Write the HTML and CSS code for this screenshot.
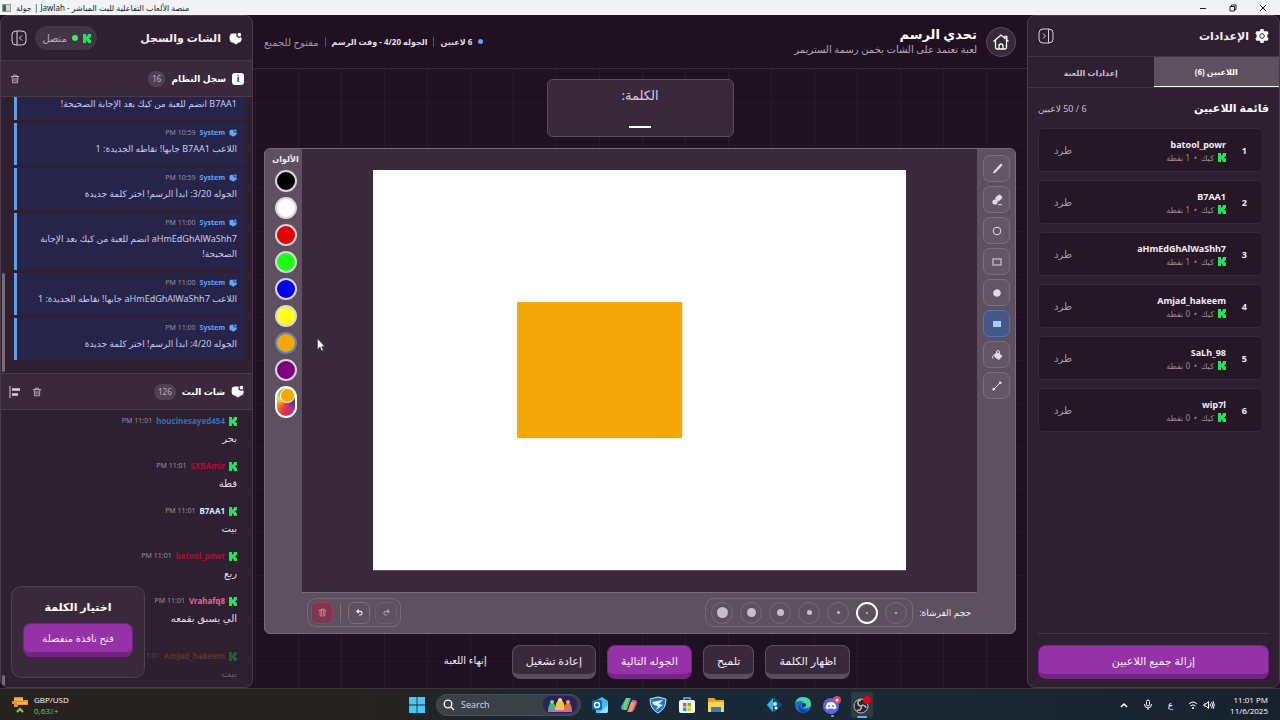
FILE: index.html
```html
<!DOCTYPE html>
<html lang="ar" dir="rtl">
<head>
<meta charset="utf-8">
<title>منصة الألعاب التفاعلية للبث المباشر - Jawlah | جولة</title>
<link rel="stylesheet" href="styles.css">
</head>
<body>
<svg class="defs" aria-hidden="true">
  <symbol id="kick" viewBox="0 0 9 10"><path d="M0 0h3.400v2.800h1V1.500h1V0H9v3.200H8v1.200H7v1.200h1v1.200h1V10H5.400V8.500h-1V7.200h-1V10H0z"/></symbol>
  <symbol id="chat" viewBox="0 0 14 14"><path d="M4 1.500h4.300a3 3 0 0 0 3.700 4.400h1.500V8c0 2-1.300 3.200-3 3.400L7.500 13.500 4.500 11.500C2 11.300.7 10 .7 7.800V5C.7 2.800 2 1.500 4 1.500z"/><circle cx="11.200" cy="2.900" r="2"/></symbol>
  <symbol id="trash" viewBox="0 0 12 12"><path d="M1.500 3h9M4.300 2.800V1.300h3.400v1.500M2.600 3.200l.4 7.300h6l.4-7.300M4.800 5v3.600M7.200 5v3.600" fill="none" stroke="currentColor" stroke-linecap="round"/></symbol>
  <symbol id="undo" viewBox="0 0 12 12"><path d="M5 2L2.500 4.500 5 7M3 4.500h4a2.400 2.400 0 0 1 0 4.800H5.500" fill="none" stroke="currentColor" stroke-width="1.500"/></symbol>
</svg>

<div class="window">
  <header class="titlebar">
    <div class="win-controls">
      <button aria-label="إغلاق"><svg width="8" height="8" viewBox="0 0 8 8"><path d="M1 1l6 6M7 1L1 7"/></svg></button>
      <button aria-label="استعادة"><svg width="8" height="8" viewBox="0 0 8 8"><path d="M1 2.500h4.500V7H1zM2.500 2V1H7v4.500H6"/></svg></button>
      <button aria-label="تصغير"><svg width="8" height="8" viewBox="0 0 8 8"><path d="M1 4.500h6"/></svg></button>
    </div>
    <div class="win-title"><span>منصة الألعاب التفاعلية للبث المباشر - Jawlah | جولة</span><i class="favicon"></i></div>
  </header>

  <div class="app">
    <aside class="panel settings">
      <div class="panel-head">
        <svg class="gear" width="14" height="14" viewBox="0 0 14 14"><path d="M5.500 0h3l.5 1.900 1.300.7 1.900-.6 1.500 2.600L12.300 6v2l1.400 1.400-1.500 2.600-1.900-.6-1.300.7-.5 1.900h-3L5 12.100l-1.300-.7-1.900.6L.3 9.400 1.700 8V6L.3 4.600 1.800 2l1.900.6L5 1.900z" fill="#fff"/><circle cx="7" cy="7" r="2.300" fill="none" stroke="#2f2031"/></svg>
        <h2>الإعدادات</h2>
        <button class="icon-btn push" aria-label="طي الإعدادات"><svg width="16" height="16" viewBox="0 0 16 16"><rect x="1" y="1" width="14" height="14" rx="4"/><path d="M10.500 1v14M5 5.500L7.500 8 5 10.500"/></svg></button>
      </div>
      <nav class="tabs"><button class="tab active">اللاعبين (6)</button><button class="tab">إعدادات اللعبة</button></nav>
      <div class="players-head"><h3>قائمة اللاعبين</h3><span>6 / 50 لاعبين</span></div>
      <ol class="players">
        <li><b class="rank">1</b><div class="who"><strong>batool_powr</strong><small><svg class="kick"><use href="#kick"/></svg><span>كيك</span><span>•</span><span>1 نقطة</span></small></div><button>طرد</button></li>
        <li><b class="rank">2</b><div class="who"><strong>B7AA1</strong><small><svg class="kick"><use href="#kick"/></svg><span>كيك</span><span>•</span><span>1 نقطة</span></small></div><button>طرد</button></li>
        <li><b class="rank">3</b><div class="who"><strong>aHmEdGhAlWaShh7</strong><small><svg class="kick"><use href="#kick"/></svg><span>كيك</span><span>•</span><span>1 نقطة</span></small></div><button>طرد</button></li>
        <li><b class="rank">4</b><div class="who"><strong>Amjad_hakeem</strong><small><svg class="kick"><use href="#kick"/></svg><span>كيك</span><span>•</span><span>0 نقطة</span></small></div><button>طرد</button></li>
        <li><b class="rank">5</b><div class="who"><strong>SaLh_98</strong><small><svg class="kick"><use href="#kick"/></svg><span>كيك</span><span>•</span><span>0 نقطة</span></small></div><button>طرد</button></li>
        <li><b class="rank">6</b><div class="who"><strong>wip7l</strong><small><svg class="kick"><use href="#kick"/></svg><span>كيك</span><span>•</span><span>0 نقطة</span></small></div><button>طرد</button></li>
      </ol>
      <div class="panel-foot"><button class="btn primary wide">إزالة جميع اللاعبين</button></div>
    </aside>

    <main class="stage">
      <header class="stage-head">
        <button class="home" aria-label="الرئيسية"><svg width="18" height="18" viewBox="0 0 18 18"><path d="M1.500 8.500L9 2l4 3.400V3.500h1.800v3.400l1.700 1.600M3.500 7v7.500q0 1.500 1.500 1.500h8q1.500 0 1.500-1.500V7M7 16v-3a2 2 0 0 1 4 0v3"/></svg></button>
        <div class="game"><h1>تحدي الرسم</h1><p>لعبة تعتمد على الشات يخمن رسمة الستريمر</p></div>
        <div class="status push"><i class="dot"></i><b>6 لاعبين</b><i class="bar"></i><b>الجوله 4/20 - وقت الرسم</b><i class="bar"></i><span>مفتوح للجميع</span></div>
      </header>
      <div class="stage-body">
        <section class="word"><span>الكلمة:</span><i class="blank"></i></section>
        <section class="board">
          <div class="tools">
            <button aria-label="فرشاة"><svg viewBox="0 0 12 12"><path d="M10 2L6 6.500" stroke-width="2.500" stroke-linecap="round"/><path d="M4.300 6.300L6 8q-1 2.500-4.500 2.300Q3 9 3 8z" fill="currentColor" stroke="none"/></svg></button>
            <button aria-label="ممحاة"><svg viewBox="0 0 12 12"><g fill="currentColor" stroke="none"><rect x="4.500" y="1.500" width="6.500" height="5" rx="1.500" transform="rotate(-42 7.700 4)"/><circle cx="4" cy="8" r="2.600"/></g><path d="M7 10.700h4"/></svg></button>
            <button aria-label="دائرة"><svg viewBox="0 0 12 12"><circle cx="6" cy="6" r="3.800"/></svg></button>
            <button aria-label="مستطيل"><svg viewBox="0 0 12 12"><rect x="2" y="3" width="8" height="6"/></svg></button>
            <button aria-label="دائرة ممتلئة"><svg viewBox="0 0 12 12"><circle cx="6" cy="6" r="3.300" fill="currentColor"/></svg></button>
            <button class="active" aria-label="مستطيل ممتلئ"><svg viewBox="0 0 12 12"><rect x="2.500" y="3.500" width="7" height="5" fill="currentColor"/></svg></button>
            <button aria-label="تعبئة"><svg viewBox="0 0 12 12"><path d="M4 5l3-1 4 3-3 3.500-4-2.500z" fill="currentColor"/><path d="M5.500 5V3a1.500 1.500 0 0 1 3 0v3M4 6Q1.500 5.500 1.500 9.500"/></svg></button>
            <button aria-label="خط"><svg viewBox="0 0 12 12"><path d="M3 9l6-6"/><g fill="currentColor" stroke="none"><circle cx="2.800" cy="9.200" r="1.400"/><circle cx="9.200" cy="2.800" r="1.400"/></g></svg></button>
          </div>
          <div class="surface"><svg class="canvas" viewBox="0 0 533 400" role="img" aria-label="لوحة الرسم"><rect width="533" height="400" fill="#fff"/><rect x="144" y="132" width="165" height="136" fill="#f5a70a"/></svg></div>
          <div class="colors"><b>الألوان</b>
            <button class="c-black" aria-label="أسود"></button><button class="c-white" aria-label="أبيض"></button><button class="c-red" aria-label="أحمر"></button><button class="c-green" aria-label="أخضر"></button><button class="c-blue" aria-label="أزرق"></button><button class="c-yellow" aria-label="أصفر"></button><button class="c-orange" aria-label="برتقالي"></button><button class="c-purple" aria-label="بنفسجي"></button><button class="c-custom" aria-label="لون مخصص"><i></i></button>
          </div>
          <div class="board-foot">
            <span class="brush-label">حجم الفرشاة:</span>
            <div class="sizes">
              <button aria-label="1"><i class="s1"></i></button><button class="active" aria-label="2"><i class="s2"></i></button><button aria-label="3"><i class="s3"></i></button><button aria-label="4"><i class="s4"></i></button><button aria-label="5"><i class="s5"></i></button><button aria-label="6"><i class="s6"></i></button><button aria-label="7"><i class="s7"></i></button>
            </div>
            <div class="history push">
              <button class="disabled" aria-label="إعادة"><svg class="flip"><use href="#undo"/></svg></button>
              <button aria-label="تراجع"><svg><use href="#undo"/></svg></button>
              <i class="bar"></i>
              <button class="danger" aria-label="مسح"><svg><use href="#trash"/></svg></button>
            </div>
          </div>
        </section>
        <div class="actions">
          <button class="btn">اظهار الكلمة</button><button class="btn">تلميح</button><button class="btn primary">الجوله التالية</button><button class="btn">إعادة تشغيل</button><button class="btn plain">إنهاء اللعبة</button>
        </div>
      </div>
    </main>

    <aside class="panel chat">
      <div class="panel-head tall">
        <svg class="ico"><use href="#chat"/></svg><h2>الشات والسجل</h2>
        <span class="live push"><svg class="kick"><use href="#kick"/></svg><i></i>متصل</span>
        <button class="icon-btn" aria-label="طي الشات"><svg width="16" height="16" viewBox="0 0 16 16"><rect x="1" y="1" width="14" height="14" rx="4"/><path d="M6 1v14M11 5.500L8.500 8l2.500 2.500"/></svg></button>
      </div>
      <div class="sub-head"><i class="info">i</i><h3>سجل النظام</h3><span class="count">16</span><button class="icon-btn push" aria-label="حذف السجل"><svg class="sm"><use href="#trash"/></svg></button></div>
      <div class="log">
        <i class="thumb"></i>
        <article><header><svg><use href="#chat"/></svg><b>System</b><time>10:59 PM</time></header><p>B7AA1 انضم للعبة من كيك بعد الإجابة الصحيحة!</p></article>
        <article><header><svg><use href="#chat"/></svg><b>System</b><time>10:59 PM</time></header><p>اللاعب B7AA1 جابها! نقاطه الجديدة: 1</p></article>
        <article><header><svg><use href="#chat"/></svg><b>System</b><time>10:59 PM</time></header><p>الجوله 3/20: ابدأ الرسم! اختر كلمة جديدة</p></article>
        <article><header><svg><use href="#chat"/></svg><b>System</b><time>11:00 PM</time></header><p>aHmEdGhAlWaShh7 انضم للعبة من كيك بعد الإجابة الصحيحة!</p></article>
        <article><header><svg><use href="#chat"/></svg><b>System</b><time>11:00 PM</time></header><p>اللاعب aHmEdGhAlWaShh7 جابها! نقاطه الجديدة: 1</p></article>
        <article><header><svg><use href="#chat"/></svg><b>System</b><time>11:00 PM</time></header><p>الجوله 4/20: ابدأ الرسم! اختر كلمة جديدة</p></article>
      </div>
      <div class="sub-head"><svg class="ico"><use href="#chat"/></svg><h3>شات البث</h3><span class="count">126</span><button class="icon-btn push" aria-label="حذف الشات"><svg class="sm"><use href="#trash"/></svg></button><button class="icon-btn" aria-label="محاذاة"><svg width="12" height="12" viewBox="0 0 12 12"><path d="M1 0v12"/><path d="M3 3.500h8M3 8.500h6" stroke-width="2.500"/></svg></button></div>
      <div class="feed">
        <article><header><svg class="kick"><use href="#kick"/></svg><b class="n-blue">houcinesayed454</b><time>11:01 PM</time></header><p>بحر</p></article>
        <article><header><svg class="kick"><use href="#kick"/></svg><b class="n-red">SXBAmir</b><time>11:01 PM</time></header><p>قطة</p></article>
        <article><header><svg class="kick"><use href="#kick"/></svg><b class="n-ice">B7AA1</b><time>11:01 PM</time></header><p>بيت</p></article>
        <article><header><svg class="kick"><use href="#kick"/></svg><b class="n-red">batool_powr</b><time>11:01 PM</time></header><p>ربع</p></article>
        <article><header><svg class="kick"><use href="#kick"/></svg><b class="n-pink">Vrahafq8</b><time>11:01 PM</time></header><p>الي يسبق بقمعه</p></article>
        <article class="entering"><header><svg class="kick"><use href="#kick"/></svg><b class="n-gold">Amjad_hakeem</b><time>11:01 PM</time></header><p>بيت</p></article>
        <i class="thumb end"></i>
      </div>
      <section class="popup"><h3>اختيار الكلمة</h3><button class="btn primary">فتح نافذة منفصلة</button></section>
    </aside>
  </div>

  <footer class="taskbar" dir="ltr">
    <div class="widget"><svg width="18" height="18" viewBox="0 0 18 18"><path d="M2 1h9v3h5v5H6v2H2V8H0V5h2z" fill="#e8922f"/><path d="M2 3.500h9M5 7h10" stroke="#ffc35a" stroke-width="1.500"/><path d="M5 16l3-3 3 3" fill="none" stroke="#7bd63b" stroke-width="2"/></svg><div><span>GBP/USD</span><span class="up">0,63٪+</span></div></div>
    <div class="dock">
      <button aria-label="Start"><svg width="16" height="16" viewBox="0 0 16 16" fill="#4cc7f5"><path d="M0 0h7.600v7.600H0zM8.400 0H16v7.600H8.400zM0 8.400h7.600V16H0zM8.400 8.400H16V16H8.400z"/></svg></button>
      <label class="search"><svg width="12" height="12" viewBox="0 0 12 12"><circle cx="5" cy="5" r="3.800"/><path d="M8 8l3 3"/></svg><input type="search" placeholder="Search" aria-label="Search"><svg class="art" width="34" height="17" viewBox="0 0 34 17"><rect width="34" height="17" rx="8" fill="#2b2060"/><path d="M5 16q0-9 4-9t4 9z" fill="#47b86b"/><path d="M12 16q0-12 5-12t5 12z" fill="#f3c34a"/><path d="M21 16q0-9 4-9t4 9z" fill="#e8713a"/><circle cx="9" cy="6" r="2" fill="#7edb7d"/><circle cx="17" cy="4" r="2" fill="#ffe070"/><circle cx="25" cy="6" r="2" fill="#ff9960"/><path d="M5 15h24" stroke="#d05fc8" stroke-width="2"/></svg></label>
      <button aria-label="Outlook"><svg width="18" height="18" viewBox="0 0 18 18"><path d="M4 5l7-4 6 4v10q0 2-2 2H5z" fill="#4ab8ef"/><path d="M8 17l9-8v6q0 2-2 2z" fill="#91dffa"/><rect x="1" y="4" width="10" height="10" rx="2" fill="#1267b9"/><circle cx="6" cy="9" r="2.500" fill="none" stroke="#fff" stroke-width="1.400"/></svg></button>
      <button aria-label="Copilot"><svg width="18" height="18" viewBox="0 0 18 18"><path d="M6 2h5L7 14H4q-4 0-2.500-4z" fill="#38a6ee"/><path d="M3 11l3-9h3L6 14H4z" fill="#78cf55"/><path d="M12 4h2q4 0 2.500 4L14 14q-1 2-3 2H7z" fill="#d758b9"/><path d="M11 6h4l-3 9q-1 1-4 1z" fill="#f6a054"/></svg></button>
      <button aria-label="Rocket League"><svg width="18" height="18" viewBox="0 0 18 18"><path d="M9 1l8 2q0 10-8 14Q1 13 1 3z" fill="#1b76c3" stroke="#cfe5f5"/><path d="M3 6l11-2-4 4 4 1-7 5 2-4-4-1z" fill="#e9f5ff"/></svg></button>
      <button aria-label="Store"><svg width="18" height="18" viewBox="0 0 18 18"><path d="M6 5V2h6v3" fill="none" stroke="#58b8e8" stroke-width="1.500"/><rect x="1" y="4" width="16" height="13" rx="2" fill="#f4f6f8"/><path d="M5 7h3.500v3.500H5z" fill="#f25022"/><path d="M9.500 7H13v3.500H9.500z" fill="#7fba00"/><path d="M5 11.500h3.500V15H5z" fill="#00a4ef"/><path d="M9.500 11.500H13V15H9.500z" fill="#ffb900"/></svg></button>
      <button aria-label="Explorer"><svg width="18" height="18" viewBox="0 0 18 18"><path d="M1 2h6l2 2h8v12H1z" fill="#e6a526"/><path d="M1 6h16v10H1z" fill="#ffd35a"/><path d="M4 11h10v5H4z" fill="#2c7fc4"/></svg></button>
      <button class="after-gap" aria-label="Launcher"><svg width="18" height="18" viewBox="0 0 18 18"><path d="M9 1l8 8-8 8-8-8z" fill="#134e7d"/><path d="M8 2v14L2 9z" fill="#35b7e8"/><circle cx="10" cy="8" r="2" fill="#bfeeff"/><circle cx="11" cy="12" r="1.500" fill="#fff"/></svg></button>
      <button aria-label="Edge"><svg width="18" height="18" viewBox="0 0 18 18"><circle cx="9" cy="9" r="8" fill="#1673c9"/><path d="M1 8Q2 1 9 1q8 0 8 7 0 4-5 4-3 0-2-3 0-4-4-4-4 0-5 3z" fill="#4bd6a0"/><path d="M6 8q-1 6 7 6l2-.5Q12 17 8 17 2 14 6 8z" fill="#0b4c9a"/><circle cx="10" cy="9" r="2" fill="#17303f"/></svg></button>
      <button aria-label="Discord"><svg width="18" height="18" viewBox="0 0 18 18"><circle cx="8" cy="10" r="8" fill="#5865f2"/><path d="M4 7q4-2 8 0l1.500 5-2.500 1.500-1-1H6l-1 1L2.500 12z" fill="#fff"/><circle cx="6" cy="10" r="1" fill="#5865f2"/><circle cx="10" cy="10" r="1" fill="#5865f2"/><circle cx="14" cy="4" r="4" fill="#e04456"/><circle cx="14" cy="4" r="1.500" fill="#fff"/></svg><i class="run"></i></button>
      <button class="current" aria-label="OBS"><svg width="18" height="18" viewBox="0 0 18 18"><circle cx="8" cy="10" r="7" fill="#24272b" stroke="#b7bcc0"/><path d="M8 4a3 3 0 0 0 0 6M13 12a3 3 0 0 0-5-2M4 14a3 3 0 0 0 4-4" fill="none" stroke="#b7bcc0" stroke-width="1.500"/><circle cx="14" cy="4" r="4" fill="#e50012"/></svg><i class="run wide-run"></i></button>
    </div>
    <div class="tray">
      <svg width="8" height="8" viewBox="0 0 8 8"><path d="M1 6l3-3 3 3" stroke-width="1.500"/></svg>
      <svg width="10" height="12" viewBox="0 0 10 12"><rect x="3.500" y="1" width="3" height="6" rx="1.500"/><path d="M1.500 5q0 4 3.500 4t3.500-4M5 9v2"/></svg>
      <span class="lang">ع</span>
      <span class="net"><svg width="10" height="10" viewBox="0 0 10 10"><path d="M1 4q4-4 8 0M2.500 6q2.500-2.500 5 0"/><circle cx="5" cy="8" r="1" fill="#fff" stroke="none"/></svg><svg width="12" height="10" viewBox="0 0 12 10"><path d="M1 4h2l2.500-2.500v7L3 6H1zM7 3.500q1 1.500 0 3M8.500 2q2.500 3 0 6M10 1q2.500 4 0 8"/></svg></span>
      <time>11:01 PM<br>11/6/2025</time>
    </div>
  </footer>
  <svg class="cursor" width="8" height="14" viewBox="0 0 8 14"><path d="M.5.500v11L3 9l1.700 4 1.600-.7L4.600 8.500h3z" fill="#fff" stroke="#333" stroke-width=".5"/></svg>
</div>
</body>
</html>
```

FILE: styles.css
```css
* { box-sizing: border-box; }
body { margin: 0; font-family: "Noto Sans", "DejaVu Sans", sans-serif; font-size: 9px; color: #f3edf5; background: #1f1121; }
h1, h2, h3, p, ol { margin: 0; padding: 0; }
button { font: inherit; color: inherit; background: none; border: 0; padding: 0; display: flex; align-items: center; justify-content: center; cursor: pointer; flex-shrink: 0; }
svg { display: block; flex-shrink: 0; }
i { font-style: normal; }
.defs { position: absolute; width: 0; height: 0; }
.push { margin-inline-start: auto; }
.kick { width: 8px; height: 9px; fill: #1fe45c; }
.window { height: 100vh; display: flex; flex-direction: column; position: relative; overflow: hidden; }

.titlebar { height: 15px; flex-shrink: 0; background: #f1f3f7; color: #222; display: flex; align-items: center; justify-content: space-between; padding: 0 13px 0 2px; }
.win-controls { display: flex; gap: 22px; }
.win-controls svg { fill: none; stroke: #222; stroke-width: 1; }
.win-title { display: flex; align-items: center; gap: 5px; font-size: 8px; line-height: 14px; white-space: nowrap; }
.favicon { width: 9px; height: 8px; border: 1px solid #999; background: linear-gradient(90deg, #277650 50%, #c9dccf 50%); }

.app { flex: 1; min-height: 0; display: flex; }
.panel { width: 253px; flex-shrink: 0; display: flex; flex-direction: column; background: #2e2030; border: 1px solid #493b4b; border-radius: 8px; position: relative; overflow: hidden; }
.panel-head { display: flex; align-items: center; height: 41px; padding: 0 10px; gap: 6px; border-bottom: 1px solid #433446; flex-shrink: 0; }
.panel-head.tall { height: 45px; gap: 8px; }
h2 { font-size: 11px; line-height: 16px; white-space: nowrap; }
.icon-btn { min-width: 16px; color: #c9bdcb; }
.icon-btn svg { fill: none; stroke: #d9cedb; }
.tabs { display: flex; height: 31px; flex-shrink: 0; border-bottom: 1px solid #433446; }
.tab { flex: 1; font-size: 8px; font-weight: 700; color: #cabdcc; }
.tab.active { background: #5d505f; color: #fff; border-bottom: 1px solid #fff; }
.players-head { display: flex; justify-content: space-between; align-items: center; height: 40px; padding: 0 10px; color: #c9bdcb; font-size: 9px; }
h3 { font-size: 11px; line-height: 14px; color: #fff; white-space: nowrap; }
.players { list-style: none; display: flex; flex-direction: column; gap: 8px; padding: 0 16px 0 10px; flex: 1; }
.players li { height: 44px; border: 1px solid #39293b; border-radius: 5px; background: #251726; display: flex; align-items: center; padding: 0 15px; }
.players li > button { margin-inline-start: auto; color: #a99dac; font-size: 10px; }
.rank { width: 21px; }
.who { display: flex; flex-direction: column; align-items: flex-start; }
.who strong { display: block; font-size: 9px; line-height: 14px; font-weight: 700; }
.who small { display: flex; align-items: center; gap: 4px; font-size: 8px; line-height: 11px; color: #9a8d9d; }
.panel-foot { margin: 0 10px; padding: 11px 0 8px; border-top: 1px solid #433446; }

.btn { height: 34px; padding: 0 13px; border: 1px solid #5b4d5e; border-bottom-width: 5px; border-radius: 8px; background: #39293b; color: #f3edf5; font-size: 11px; white-space: nowrap; }
.btn.primary { background: #9632a8; border-color: #762386; }
.btn.plain { background: none; border-color: transparent; font-size: 10px; }
.btn.wide { width: 100%; }

.stage { flex: 1; min-width: 0; display: flex; flex-direction: column; background: #1f1121; }
.stage-head { height: 54px; flex-shrink: 0; display: flex; align-items: center; gap: 9px; padding: 0 11px; border-bottom: 1px solid #382a3b; }
.home { width: 30px; height: 30px; border-radius: 50%; border: 1px solid #5b4d5e; background: #39293b; }
.home svg { fill: none; stroke: #fff; stroke-width: 1.3; }
h1 { font-size: 13px; line-height: 16px; color: #fff; }
.game p { font-size: 10px; line-height: 15px; color: #b5a8b8; }
.status { display: flex; align-items: center; gap: 6px; font-size: 8px; white-space: nowrap; color: #a094a3; }
.status b { color: #e6dde8; }
.status span { font-size: 10px; }
.dot { width: 5px; height: 5px; border-radius: 50%; background: #60a5fa; }
.bar { width: 1px; height: 10px; background: #5d505f; }
.stage-body { flex: 1; min-height: 0; display: flex; flex-direction: column; align-items: stretch; padding: 10px 11px 9px; background-image: linear-gradient(90deg, #2a1a2c 1px, transparent 1px), linear-gradient(#26162a 1px, transparent 1px); background-size: 43px 43px; background-position: 2px 33px; }
.word { width: 187px; height: 58px; align-self: center; border: 1px solid #5b4d5e; border-radius: 6px; background: #39293b; display: flex; flex-direction: column; align-items: center; justify-content: space-between; padding: 5px 0 8px; font-size: 13px; line-height: 20px; color: #d8cddb; }
.blank { width: 22px; height: 2px; background: #fff; }
.board { flex: 1; min-height: 0; margin: 11px 0; border: 1px solid #776a79; border-radius: 6px; background: #5d505f; display: grid; grid-template-columns: 38px 1fr 37px; grid-template-rows: 1fr 41px; overflow: hidden; }
.tools { display: flex; flex-direction: column; align-items: center; gap: 4px; padding: 6px 0 0 1px; }
.tools button { width: 27px; height: 27px; border: 1px solid #7b6f7d; border-radius: 7px; color: #e2dae4; background: #635765; }
.tools svg { width: 12px; height: 12px; fill: none; stroke: currentColor; }
.tools .active { background: #465685; border-color: #4d78b8; color: #9bd0ff; }
.surface { background: #39293b; display: flex; align-items: center; justify-content: center; min-width: 0; min-height: 0; }
.canvas { width: 79%; height: auto; }
.colors { display: flex; flex-direction: column; align-items: center; gap: 5px; padding: 3px 0 0 4px; grid-row: 1; grid-column: 3; font-size: 8px; line-height: 13px; }
.colors button { width: 22px; height: 22px; border-radius: 11px; border: 2px solid #ddd3df; }
.c-black { background: #000; }
.c-white { background: #fff; }
.c-red { background: #e60000; }
.c-green { background: #1bff14; }
.c-blue { background: #0000f0; }
.c-yellow { background: #ffff1a; }
.c-orange { background: #f5a70a; }
.c-purple { background: #7c007d; }
.colors .c-orange { border-color: #5a86b8; }
.colors .c-custom { height: 32px; border-color: #fff; background: conic-gradient(#b7dc5a, #5034a0 25%, #b5308c 40%, #e8363a 55%, #f48a28 70%, #f7dc3a 82%, #6cc94f 92%, #b7dc5a); align-items: flex-start; justify-content: flex-start; }
.c-custom i { width: 15px; height: 15px; border-radius: 50%; border: 1px solid #fff; background: #f5a70a; }
.board-foot { grid-column: 1 / -1; display: flex; align-items: center; gap: 6px; padding: 0 44px 0 42px; font-size: 9px; position: relative; }
.brush-label { white-space: nowrap; }
.board-foot::before { content: ""; position: absolute; top: 0; left: 37px; right: 38px; height: 1px; background: #776a79; }
.sizes, .history { display: flex; align-items: center; gap: 7px; height: 29px; padding: 0 5px; border: 1px solid #776a79; border-radius: 9px; }
.history { gap: 5px; padding: 0 3px; }
.history .bar { height: 20px; margin: 0 2px; background: #7b6f7d; }
.sizes button { width: 22px; height: 22px; border: 1px solid #776a79; border-radius: 50%; }
.sizes .active { border: 2px solid #fff; }
.sizes i { border-radius: 50%; background: #c5bdc7; }
.s1, .s2 { width: 2px; height: 2px; }
.s3 { width: 3px; height: 3px; }
.s4 { width: 5px; height: 5px; }
.s5 { width: 7px; height: 7px; }
.s6 { width: 9px; height: 9px; }
.s7 { width: 11px; height: 11px; }
.history button { width: 22px; height: 22px; border: 1px solid #7b6f7d; border-radius: 6px; }
.history svg { width: 9px; height: 9px; }
.history .danger { background: #7b3850; border-color: #9b4358; color: #ff8b98; }
.history .disabled { opacity: .5; }
.flip { transform: scaleX(-1); }
.actions { display: flex; justify-content: center; gap: 11px; }

.ico { width: 13px; height: 13px; fill: #fff; }
.live { display: flex; align-items: center; gap: 5px; height: 24px; padding: 0 6px; border-radius: 12px; background: #433546; color: #b9adbc; font-size: 10px; }
.live i { width: 6px; height: 6px; border-radius: 50%; background: #3be873; }
.live { min-width: 62px; }
.sub-head { height: 36px; flex-shrink: 0; background: #39293b; border-bottom: 1px solid #493b4b; display: flex; align-items: center; gap: 6px; padding: 0 8px 0 6px; }
.sub-head h3 { font-size: 9px; }
.info { width: 12px; height: 12px; border-radius: 3px; background: #fff; color: #39293b; font-size: 9px; line-height: 12px; text-align: center; font-weight: 700; }
.count { background: #504254; color: #b9adbc; border-radius: 8px; line-height: 16px; padding: 0 4px; font-size: 8px; }
.sm { width: 10px; height: 10px; }
.log { height: 277px; flex-shrink: 0; position: relative; display: flex; flex-direction: column; justify-content: flex-end; gap: 3px; padding: 0 7px 13px 13px; overflow: hidden; border-bottom: 1px solid #493b4b; }
.log article { background: #27244a; border-left: 3px solid #629ee8; padding: 3px 8px 9px; flex-shrink: 0; }
article header { display: flex; align-items: center; gap: 4px; font-size: 8px; line-height: 14px; }
.log header svg { width: 8px; height: 8px; fill: #60a5fa; }
.log b { color: #60a5fa; font-size: 7px; }
time { color: #9a8da0; font-size: 7px; }
.log p { font-size: 9px; line-height: 15px; padding-top: 1px; color: #c5cdf0; }
.thumb { position: absolute; left: 1px; bottom: 1px; width: 3px; height: 99px; border-radius: 2px; background: #776a79; }
.thumb.end { height: 11px; }
.feed { flex: 1; min-height: 0; position: relative; overflow: hidden; padding: 3px 15px 0; display: flex; flex-direction: column; gap: 10px; }
.feed article { flex-shrink: 0; }
.feed header { line-height: 16px; }
.feed p { font-size: 10px; line-height: 19px; color: #e6dde8; }
.feed .entering { opacity: .3; padding-top: 10px; }
.n-blue { color: #2a72be; }
.n-red { color: #a4123f; }
.n-ice { color: #dce8ff; }
.n-pink { color: #e46294; }
.n-gold { color: #ab7138; }
.popup { position: absolute; left: 10px; bottom: 9px; width: 134px; height: 92px; border: 1px solid #4f4152; border-radius: 10px; background: #39293b; display: flex; flex-direction: column; align-items: center; padding: 13px 11px; gap: 9px; }
.popup .btn { width: 100%; padding: 0; font-size: 10px; }

.taskbar { height: 32px; flex-shrink: 0; display: grid; grid-template-columns: 1fr auto 1fr; align-items: center; background: linear-gradient(90deg, #27221f 0%, #26221f 28%, #182936 48%, #1a2833 75%, #17222d 100%); border-top: 1px solid #3a3436; padding: 0 12px; color: #fff; font-size: 8px; font-family: "Open Sans", "Noto Sans", "DejaVu Sans", sans-serif; }
.widget { display: flex; align-items: center; gap: 4px; }
.widget div { display: flex; flex-direction: column; line-height: 11px; }
.up { color: #74c864; }
.dock { display: flex; align-items: center; gap: 9px; }
.dock button { position: relative; width: 20px; height: 24px; }
.dock .after-gap { margin-left: 29px; }
.dock .current { background: #303a43; border-radius: 3px; width: 22px; height: 26px; }
.run { position: absolute; bottom: 0; left: 9px; width: 3px; height: 2px; border-radius: 1px; background: #9aa4ab; }
.wide-run { left: 6px; width: 10px; background: #59b9ee; }
.search { display: flex; align-items: center; gap: 6px; width: 145px; height: 22px; border-radius: 11px; background: #3a4248; border: 1px solid #465057; padding: 0 3px 0 6px; }
.search svg:first-child { fill: none; stroke: #fff; stroke-width: 1.3; }
.search input { flex: 1; min-width: 0; background: none; border: 0; outline: 0; padding: 0; color: #fff; font: inherit; font-size: 9px; }
.search input::placeholder { color: #d5d9dc; }
.tray { justify-self: end; display: flex; align-items: center; gap: 15px; }
.tray svg { fill: none; stroke: #fff; }
.net { display: flex; gap: 5px; }
.lang { font-size: 9px; }
.tray time { color: #fff; font-size: 8px; line-height: 11px; text-align: right; }
.cursor { position: absolute; left: 317px; top: 338px; }
```
